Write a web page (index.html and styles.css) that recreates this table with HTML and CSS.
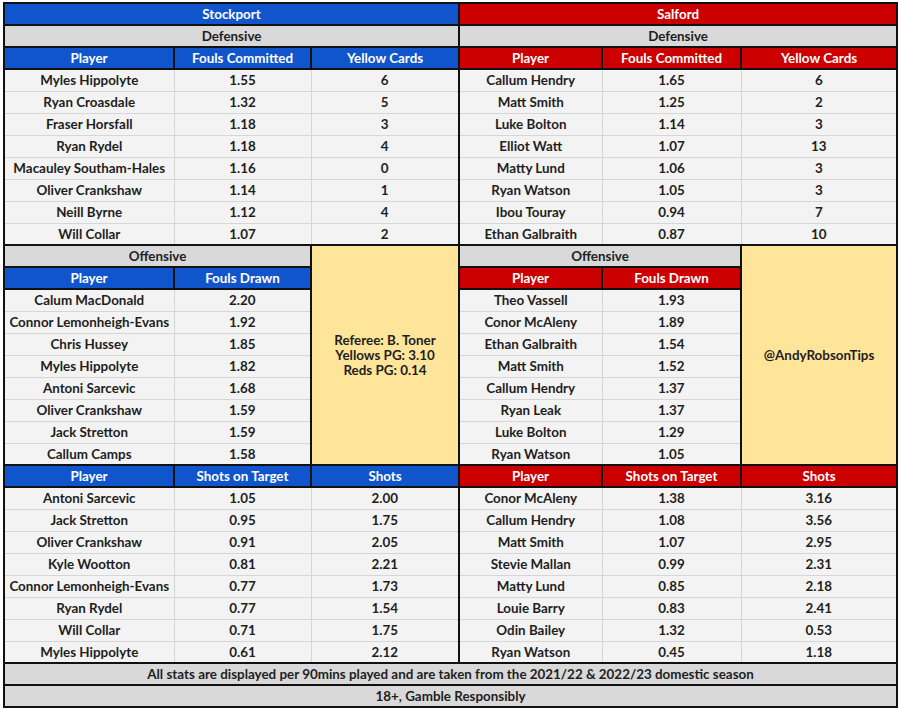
FILE: index.html
```html
<!DOCTYPE html>
<html>
<head>
<meta charset="utf-8">
<link rel="stylesheet" href="styles.css">
</head>
<body>
<table class="sheet">
  <colgroup>
    <col class="c1"><col class="c2"><col class="c3"><col class="c4"><col class="c5"><col class="c6">
  </colgroup>
  <tbody>
    <tr><td colspan="3" class="blue">Stockport</td><td colspan="3" class="red">Salford</td></tr>
    <tr><td colspan="3" class="grey">Defensive</td><td colspan="3" class="grey">Defensive</td></tr>
    <tr><td class="blue">Player</td><td class="blue">Fouls Committed</td><td class="blue">Yellow Cards</td><td class="red">Player</td><td class="red">Fouls Committed</td><td class="red">Yellow Cards</td></tr>
    <tr><td class="d l">Myles Hippolyte</td><td class="d">1.55</td><td class="d r">6</td><td class="d">Callum Hendry</td><td class="d">1.65</td><td class="d r">6</td></tr>
    <tr><td class="d l">Ryan Croasdale</td><td class="d">1.32</td><td class="d r">5</td><td class="d">Matt Smith</td><td class="d">1.25</td><td class="d r">2</td></tr>
    <tr><td class="d l">Fraser Horsfall</td><td class="d">1.18</td><td class="d r">3</td><td class="d">Luke Bolton</td><td class="d">1.14</td><td class="d r">3</td></tr>
    <tr><td class="d l">Ryan Rydel</td><td class="d">1.18</td><td class="d r">4</td><td class="d">Elliot Watt</td><td class="d">1.07</td><td class="d r">13</td></tr>
    <tr><td class="d l">Macauley Southam-Hales</td><td class="d">1.16</td><td class="d r">0</td><td class="d">Matty Lund</td><td class="d">1.06</td><td class="d r">3</td></tr>
    <tr><td class="d l">Oliver Crankshaw</td><td class="d">1.14</td><td class="d r">1</td><td class="d">Ryan Watson</td><td class="d">1.05</td><td class="d r">3</td></tr>
    <tr><td class="d l">Neill Byrne</td><td class="d">1.12</td><td class="d r">4</td><td class="d">Ibou Touray</td><td class="d">0.94</td><td class="d r">7</td></tr>
    <tr><td class="d l">Will Collar</td><td class="d">1.07</td><td class="d r">2</td><td class="d">Ethan Galbraith</td><td class="d">0.87</td><td class="d r">10</td></tr>

    <tr><td colspan="2" class="grey">Offensive</td><td rowspan="10" class="yellow"><div class="ref">Referee: B. Toner<br>Yellows PG: 3.10<br>Reds PG: 0.14</div></td><td colspan="2" class="grey">Offensive</td><td rowspan="10" class="yellow">@AndyRobsonTips</td></tr>
    <tr><td class="blue">Player</td><td class="blue">Fouls Drawn</td><td class="red">Player</td><td class="red">Fouls Drawn</td></tr>
    <tr><td class="d l">Calum MacDonald</td><td class="d">2.20</td><td class="d">Theo Vassell</td><td class="d">1.93</td></tr>
    <tr><td class="d l">Connor Lemonheigh-Evans</td><td class="d">1.92</td><td class="d">Conor McAleny</td><td class="d">1.89</td></tr>
    <tr><td class="d l">Chris Hussey</td><td class="d">1.85</td><td class="d">Ethan Galbraith</td><td class="d">1.54</td></tr>
    <tr><td class="d l">Myles Hippolyte</td><td class="d">1.82</td><td class="d">Matt Smith</td><td class="d">1.52</td></tr>
    <tr><td class="d l">Antoni Sarcevic</td><td class="d">1.68</td><td class="d">Callum Hendry</td><td class="d">1.37</td></tr>
    <tr><td class="d l">Oliver Crankshaw</td><td class="d">1.59</td><td class="d">Ryan Leak</td><td class="d">1.37</td></tr>
    <tr><td class="d l">Jack Stretton</td><td class="d">1.59</td><td class="d">Luke Bolton</td><td class="d">1.29</td></tr>
    <tr><td class="d l">Callum Camps</td><td class="d">1.58</td><td class="d">Ryan Watson</td><td class="d">1.05</td></tr>

    <tr><td class="blue">Player</td><td class="blue">Shots on Target</td><td class="blue">Shots</td><td class="red">Player</td><td class="red">Shots on Target</td><td class="red">Shots</td></tr>
    <tr><td class="d l">Antoni Sarcevic</td><td class="d">1.05</td><td class="d r">2.00</td><td class="d">Conor McAleny</td><td class="d">1.38</td><td class="d r">3.16</td></tr>
    <tr><td class="d l">Jack Stretton</td><td class="d">0.95</td><td class="d r">1.75</td><td class="d">Callum Hendry</td><td class="d">1.08</td><td class="d r">3.56</td></tr>
    <tr><td class="d l">Oliver Crankshaw</td><td class="d">0.91</td><td class="d r">2.05</td><td class="d">Matt Smith</td><td class="d">1.07</td><td class="d r">2.95</td></tr>
    <tr><td class="d l">Kyle Wootton</td><td class="d">0.81</td><td class="d r">2.21</td><td class="d">Stevie Mallan</td><td class="d">0.99</td><td class="d r">2.31</td></tr>
    <tr><td class="d l">Connor Lemonheigh-Evans</td><td class="d">0.77</td><td class="d r">1.73</td><td class="d">Matty Lund</td><td class="d">0.85</td><td class="d r">2.18</td></tr>
    <tr><td class="d l">Ryan Rydel</td><td class="d">0.77</td><td class="d r">1.54</td><td class="d">Louie Barry</td><td class="d">0.83</td><td class="d r">2.41</td></tr>
    <tr><td class="d l">Will Collar</td><td class="d">0.71</td><td class="d r">1.75</td><td class="d">Odin Bailey</td><td class="d">1.32</td><td class="d r">0.53</td></tr>
    <tr><td class="d l">Myles Hippolyte</td><td class="d">0.61</td><td class="d r">2.12</td><td class="d">Ryan Watson</td><td class="d">0.45</td><td class="d r">1.18</td></tr>

    <tr><td colspan="6" class="grey">All stats are displayed per 90mins played and are taken from the 2021/22 &amp; 2022/23 domestic season</td></tr>
    <tr><td colspan="6" class="grey">18+, Gamble Responsibly</td></tr>
  </tbody>
</table>
</body>
</html>
```
FILE: styles.css
```css
html, body {
  margin: 0;
  padding: 0;
  background: #ffffff;
}
body {
  padding: 2px 0 0 3px;
  font-family: "Lato", "Liberation Sans", sans-serif;
  font-weight: 700;
  font-size: 13.4px;
  color: #1e1e1e;
}
.sheet {
  border-collapse: collapse;
  table-layout: fixed;
  width: 893px;
}
.c1 { width: 170px; }
.c2 { width: 137px; }
.c3 { width: 148px; }
.c4 { width: 143px; }
.c5 { width: 139px; }
.c6 { width: 156px; }
.sheet tr { height: 22px; }
.sheet td {
  padding: 0 2px;
  height: 22px;
  box-sizing: border-box;
  text-align: center;
  vertical-align: middle;
  white-space: nowrap;
  overflow: hidden;
  line-height: 16px;
  border: 2px solid #111;
}
.blue { background: #1155cc; color: #ffffff; }
.red { background: #cc0000; color: #ffffff; }
.grey { background: #d9d9d9; color: #1e1e1e; }
.yellow { background: #ffe599; color: #1e1e1e; }
.sheet td.d {
  background: #f3f3f3;
  border: 1px solid #d6d6d6;
}
.sheet td.d.l { border-left: 2px solid #111; }
.sheet td.d.r { border-right: 2px solid #111; }
.ref { line-height: 15px; }
```
